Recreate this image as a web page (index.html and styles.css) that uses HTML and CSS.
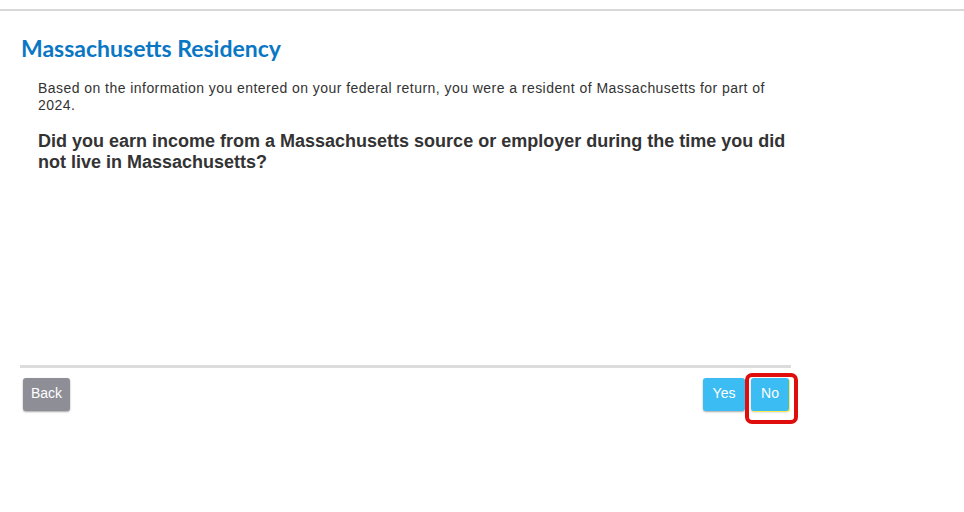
FILE: index.html
```html
<!DOCTYPE html>
<html lang="en">
<head>
  <meta charset="UTF-8" />
  <title>Massachusetts Residency</title>
  <link rel="stylesheet" href="styles.css">
</head>
<body>
  <div class="topbar"></div>

  <div class="page">
    <h1>Massachusetts Residency</h1>

    <div class="content">
      <p>Based on the information you entered on your federal return, you were a resident of Massachusetts for part of 2024.</p>
      <h2>Did you earn income from a Massachusetts source or employer during the time you did not live in Massachusetts?</h2>
    </div>

    <div class="actions">
      <button class="btn btn-back">Back</button>
      <div class="choices">
        <button class="btn btn-blue btn-yes">Yes</button>
        <div class="highlight">
          <button class="btn btn-blue btn-no">No</button>
          <div class="focus-ring"></div>
        </div>
      </div>
    </div>
  </div>
</body>
</html>
```

FILE: styles.css
```css
html, body {
  min-height: 100%;
}

body {
  margin: 0;
  font-family: 'Liberation Sans', Arial, sans-serif;
  color: #333;
  background: #fff;
}

.topbar {
  height: 9px;
  border-bottom: 2px solid #d8d8d8;
}

.page {
  width: 771px;
  margin-left: 20px;
  padding-bottom: 90px;
}

h1 {
  font-family: 'Lato', 'Open Sans', sans-serif;
  font-weight: bold;
  font-size: 23px;
  color: #0a77c4;
  margin: 23px 0 0 1px;
  line-height: 28px;
}

.content {
  padding: 18px 0 0 18px;
  height: 285px;
  border-bottom: 3px solid #dcdcdc;
}

.content p {
  font-size: 14px;
  line-height: 17px;
  letter-spacing: 0.45px;
  margin: 0;
  padding-right: 4px;
}

.content h2 {
  font-size: 18px;
  line-height: 21px;
  margin: 17px 0 0;
  font-weight: bold;
}

.actions {
  display: flex;
  justify-content: space-between;
  padding: 10px 2px 0 3px;
}

.choices {
  display: flex;
  gap: 6px;
}

.btn {
  font-family: 'Liberation Sans', Arial, sans-serif;
  font-size: 14px;
  color: #fff;
  border: none;
  border-radius: 3px;
  height: 33px;
  padding: 0 0 4px;
  box-shadow: 0 1px 2px rgba(0, 0, 0, 0.35);
  cursor: pointer;
}

.btn-back {
  background: #8d8e96;
  width: 47px;
}

.btn-blue {
  background: #3bbdf4;
}

.btn-yes {
  width: 42px;
}

.btn-no {
  width: 38px;
  box-shadow: 1px 1px 0 #ffe94d, 0 1px 2px rgba(0, 0, 0, 0.3);
}

.highlight {
  position: relative;
  display: flex;
}

.focus-ring {
  position: absolute;
  left: -6px;
  top: -5px;
  width: 53px;
  height: 51px;
  box-sizing: border-box;
  border: 4px solid #e00d0d;
  border-radius: 7px;
}
```
